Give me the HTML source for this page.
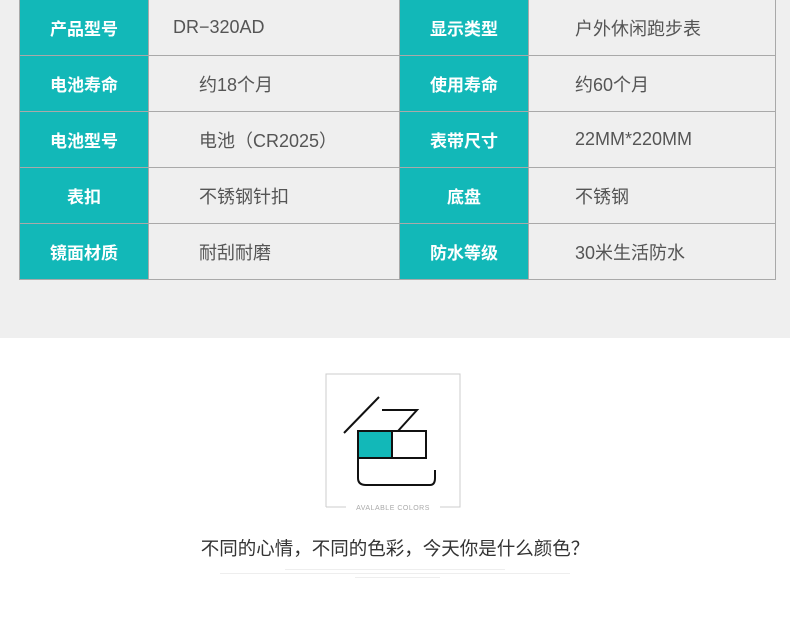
<!DOCTYPE html><html><head><meta charset="utf-8"><style>
body{margin:0;width:790px;height:637px;background:#fff;font-family:"Liberation Sans","Noto Sans CJK SC",sans-serif;position:relative;overflow:hidden}
.top{position:absolute;left:0;top:0;width:790px;height:338px;background:#efefef}
table{position:absolute;left:19px;top:-1px;border-collapse:collapse;width:757px}
td{height:55px;border:1px solid #a9a9a9;font-size:18px;color:#555;padding:0}
td.l{background:#12b8b8;color:#fff;font-weight:bold;font-size:17px;text-align:center;width:128px}
td.v{padding-left:50px}
td.v2{padding-left:46px}
</style></head><body>
<div class="top"></div>
<table>
<tr><td class="l">产品型号</td><td class="v" style="padding-left:24px;width:226px">DR−320AD</td><td class="l" style="width:125px">显示类型</td><td class="v v2">户外休闲跑步表</td></tr>
<tr><td class="l">电池寿命</td><td class="v">约18个月</td><td class="l">使用寿命</td><td class="v v2">约60个月</td></tr>
<tr><td class="l">电池型号</td><td class="v">电池（CR2025）</td><td class="l">表带尺寸</td><td class="v v2">22MM*220MM</td></tr>
<tr><td class="l">表扣</td><td class="v">不锈钢针扣</td><td class="l">底盘</td><td class="v v2">不锈钢</td></tr>
<tr><td class="l">镜面材质</td><td class="v">耐刮耐磨</td><td class="l">防水等级</td><td class="v v2">30米生活防水</td></tr>
</table>
<svg style="position:absolute;left:0;top:0" width="790" height="637">
<path d="M326 507 V374 H460 V507 H440 M326 507 H346" fill="none" stroke="#ccc" stroke-width="1"/>
<text x="393" y="510" font-size="7" fill="#aaa" text-anchor="middle" font-family="Liberation Sans" letter-spacing="0.5">AVALABLE COLORS</text>
<rect x="358" y="431" width="34" height="27" fill="#12b8b8"/>
<rect x="358" y="431" width="68" height="27" fill="none" stroke="#111" stroke-width="2"/>
<line x1="392" y1="431" x2="392" y2="458" stroke="#111" stroke-width="2"/>
<path d="M344 433 L379 397" stroke="#111" stroke-width="2" fill="none"/>
<path d="M382 410 H417 L398 431" stroke="#111" stroke-width="2" fill="none"/>
<path d="M358 458 V478 Q358 485 366 485 H430 Q435 485 435 478 V470" stroke="#111" stroke-width="2" fill="none"/>
<text x="395" y="555" font-size="18.5" fill="#333" text-anchor="middle" font-family="Liberation Sans, Noto Sans CJK SC, sans-serif">不同的心情，不同的色彩，今天你是什么颜色？</text>
<rect x="285" y="569" width="220" height="1" fill="#eee"/>
<rect x="220" y="573" width="350" height="1" fill="#eee"/>
<rect x="355" y="577" width="85" height="1" fill="#eee"/>
</svg>
</body></html>
